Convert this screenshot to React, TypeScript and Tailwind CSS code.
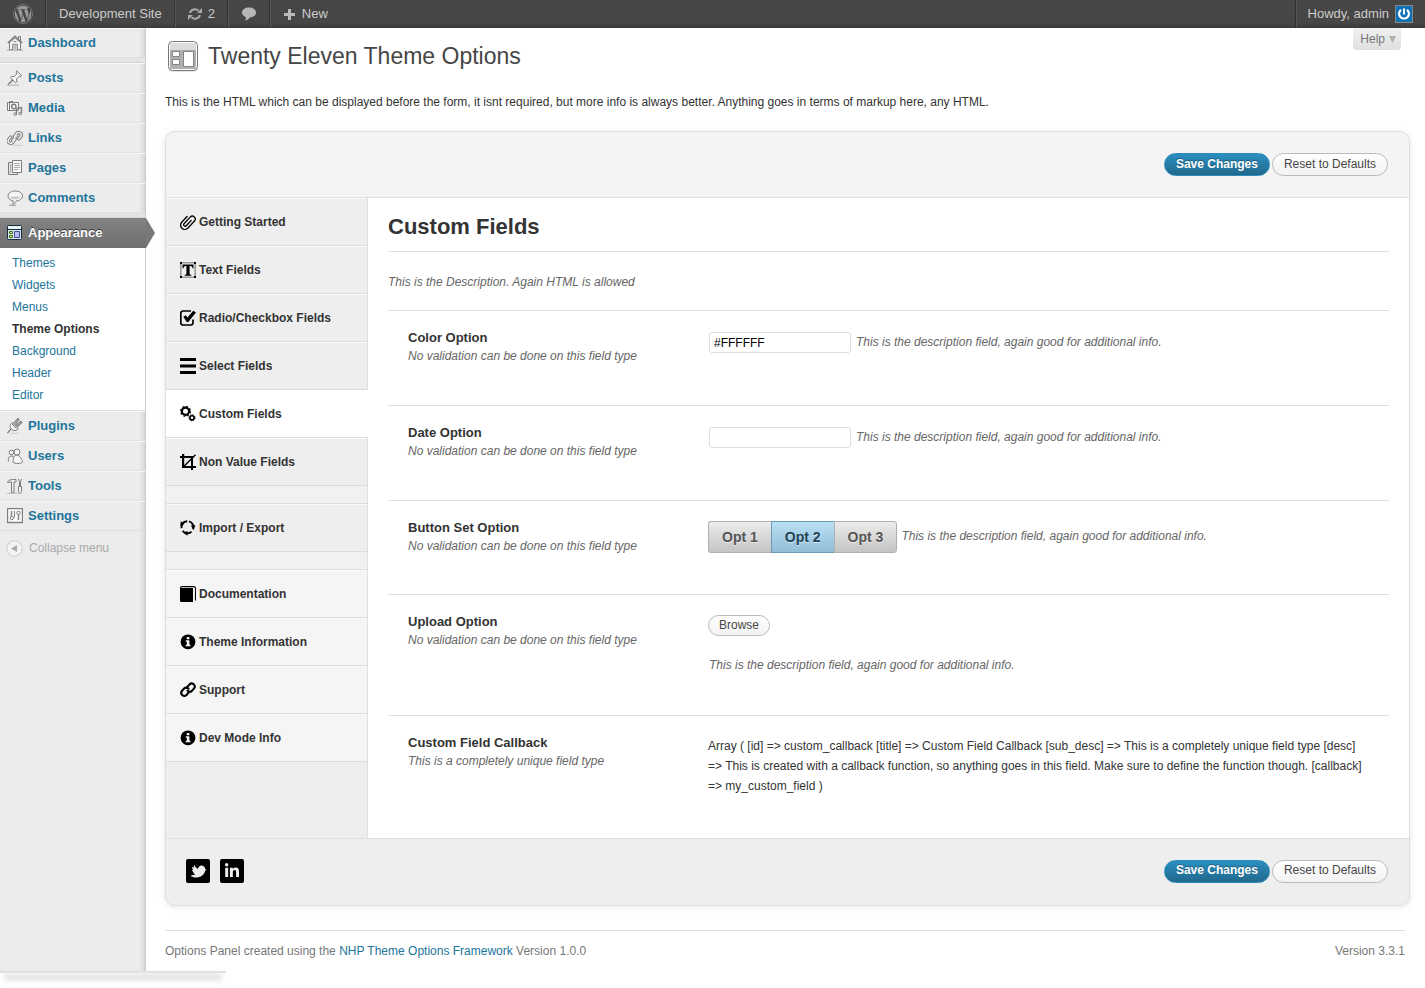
import type { ReactNode } from "react";
import { FaWordpress, FaLinkedinIn } from "react-icons/fa";

const glyph = "h-4 w-4 shrink-0";

function MenuIcon({ children }: { children: ReactNode }) {
  return (
    <svg viewBox="0 0 16 16" className={glyph} fill="none" stroke="#7d7d7d" strokeWidth="1" aria-hidden="true">
      {children}
    </svg>
  );
}

const menuIcons: Record<string, ReactNode> = {
  Dashboard: (
    <MenuIcon>
      <path d="M.8 8 8 1.2 15.2 8" strokeWidth="1.4" />
      <path d="M11.5 4V1.5h2V6" />
      <path d="M2.5 7.5v7h3.200V9.200h4.600v5.300h3.200v-7L8 3z" fill="#f8f8f8" />
      <path d="M7.200 9.500v5M8.800 9.500v5M0 15.200h16" stroke="#aaa" />
      <path d="M6.500 6.500h3" />
    </MenuIcon>
  ),
  Posts: (
    <MenuIcon>
      <path d="m9.500.800 5.300 5-1.800.6-.8-.2-2.600 2.600.3 2.800-1.300 1.200-5.200-5 1.200-1.400 2.600.2 2.500-2.600-.4-1.200z" fill="#f6f6f6" />
      <path d="m6 9.800-4.800 4.700" strokeWidth="1.500" />
      <path d="M0 15.200h12" stroke="#aaa" />
    </MenuIcon>
  ),
  Media: (
    <MenuIcon>
      <path d="M2.500 1.500h3.500M.500 2.500h11v8H.500z" fill="#f8f8f8" />
      <circle cx="6.800" cy="6.500" r="2.200" strokeWidth="1.400" />
      <path d="M2.500 3v7" />
      <path d="M9.500 14V8.500l5-1v6" strokeWidth="1.300" />
      <circle cx="8.300" cy="14" r="1.300" fill="#ddd" />
      <circle cx="13.200" cy="13.500" r="1.300" fill="#ddd" />
    </MenuIcon>
  ),
  Links: (
    <MenuIcon>
      <g strokeLinecap="round">
        <g strokeWidth="3.400">
          <path d="m7.500 6.300 2.300-3c2.300-2.200 5.800.4 4 3.200l-2 2.300" />
          <path d="m8 9.500-2.300 3c-2.300 2.200-5.800-.4-4-3.200l2-2.300" />
          <path d="m5.800 10.200 4-4.600" />
        </g>
        <g stroke="#f2f2f2" strokeWidth="1.400">
          <path d="m7.500 6.300 2.300-3c2.300-2.200 5.800.4 4 3.200l-2 2.300" />
          <path d="m8 9.500-2.300 3c-2.300 2.200-5.800-.4-4-3.200l2-2.300" />
          <path d="m5.800 10.200 4-4.600" />
        </g>
      </g>
      <path d="M6 15.300h10" stroke="#ccc" />
    </MenuIcon>
  ),
  Pages: (
    <MenuIcon>
      <path d="M5.500 2.500h-4v12h9v-2" fill="#e4e4e4" />
      <path d="M5.500.500h9v12h-9z" fill="#fafafa" />
      <path d="M7 3.500h6M7 5.500h6M7 7.500h6M7 9.500h4" stroke="#aaa" />
      <path d="M3.500 4v9" stroke="#aaa" />
    </MenuIcon>
  ),
  Comments: (
    <MenuIcon>
      <path d="M8.300 1c4 0 7.200 2 7.200 4.900s-2.900 4.900-6.200 5c-.8 1.600-2 3-3.600 3.500.6-1 .8-2.300.5-3.600C3 10.300 1 8.500 1 6c0-2.900 3.200-5 7.300-5Z" fill="#f6f6f6" />
      <path d="M3 6.500c1 3.800 9.500 3.800 10.500 0z" fill="#ccc" stroke="none" />
      <path d="M2 15.300h7" stroke="#999" />
    </MenuIcon>
  ),
  Appearance: (
    <svg viewBox="0 0 16 16" className={glyph} aria-hidden="true">
      <rect x=".5" y=".5" width="14" height="14" rx="1" fill="#cdeaf2" stroke="#1d2c3c" />
      <path d="M1 1.500h13v2H1z" fill="#f2f6fa" />
      <path d="M1 4.500h13" stroke="#1d2c3c" />
      <path d="M2.500 6.500h3v2h-3zM2.500 10.500h3v2h-3z" fill="#c7e68d" stroke="#4b6e1c" />
      <path d="M7.500 6.500h5v6h-5z" fill="#b9bbf2" stroke="#4c4f9c" />
    </svg>
  ),
  Plugins: (
    <MenuIcon>
      <path d="m5 4.500 6.500 6.300c-2 2-5 2.400-7.200.2S3 6.500 5 4.500Z" fill="#f4f4f4" />
      <path d="m6.500 5.500 4.500-5 1 1-4 5.200M10 9l4.800-4.500-1-1.200-5 4.500M4 11l-3.500 4" strokeWidth="1.200" />
      <path d="m5 6 4.500 4.500" />
      <path d="M3 15.300h9" stroke="#ccc" />
    </MenuIcon>
  ),
  Users: (
    <MenuIcon>
      <circle cx="4.500" cy="4.500" r="2.300" fill="#eee" />
      <path d="M1.500 13.500c-.7-3 .3-5.500 3-5.500s3 2 3 5.500" fill="#eee" />
      <circle cx="10" cy="4" r="3" fill="#f6f6f6" />
      <path d="M6.500 9c2-2.500 6-2 7 .5.500 2 2.500 2.500 2 4.500-1 2-8 2-9.500 0C5.500 12 7.500 11 6.500 9Z" fill="#f6f6f6" />
    </MenuIcon>
  ),
  Tools: (
    <MenuIcon>
      <path d="M.5 4.500C1.500 1.500 3.500 1.500 9 1.500V4H7v10.500H4.500V4L.5 4.500Z" fill="#eee" />
      <path d="M12.500 8V3.500l-1-2.500M13.500 8V3.500l1-2.500" />
      <path d="M11.500 8.500h3V13c0 2-3 2-3 0z" fill="#f4f4f4" />
      <path d="M0 15.300h15" stroke="#bbb" />
    </MenuIcon>
  ),
  Settings: (
    <MenuIcon>
      <rect x=".5" y=".5" width="15" height="14" fill="#fafafa" strokeWidth="1.400" />
      <path d="M4.500 3v5M11.500 6.500V12" strokeWidth="1.400" />
      <path d="M7.500 3v6.500" />
      <circle cx="4.800" cy="10" r="1.700" />
      <circle cx="11.500" cy="4.800" r="1.700" />
    </MenuIcon>
  ),
};

function NavIcon({ children }: { children: ReactNode }) {
  return (
    <svg viewBox="0 0 16 16" className={glyph} fill="#000" aria-hidden="true">
      {children}
    </svg>
  );
}

const navIcons: Record<string, ReactNode> = {
  clip: (
    <NavIcon>
      <path
        d="M9.600 4.500v7.300a1.500 1.500 0 0 1-3 0V2.800a2.900 2.900 0 0 1 5.800 0v9.500a4.200 4.200 0 0 1-8.500 0V4.500"
        transform="rotate(43 8 7.500)"
        fill="none"
        stroke="#000"
        strokeWidth="1.300"
        strokeLinecap="round"
      />
    </NavIcon>
  ),
  text: (
    <NavIcon>
      <path d="M.8.800h14.400v14.400H.8z" fill="none" stroke="#999" strokeWidth="1.600" />
      <path d="M0 0h2v2H0zM14 0h2v2h-2zM0 14h2v2H0zM14 14h2v2h-2z" />
      <path d="M2.500 2.500h11v3.700h-1c-.3-1.700-1-2.200-2.900-2.200v7.700c0 .8.600 1 1.700 1.100v.9H4.700v-.9c1.100-.1 1.700-.3 1.700-1.100V4C4.500 4 3.800 4.500 3.500 6.200h-1z" />
    </NavIcon>
  ),
  check: (
    <NavIcon>
      <path d="M11 1H3a2.200 2.200 0 0 0-2.200 2.200v9.600A2.200 2.200 0 0 0 3 15h7.800a2.200 2.200 0 0 0 2.200-2.200V9.500" fill="none" stroke="#000" strokeWidth="1.700" />
      <path d="m3.300 6.800 2.500-1.500 1.700 2.200L13.200.800 16 2.500 8.300 12H6.700z" />
    </NavIcon>
  ),
  bars: (
    <NavIcon>
      <path d="M0 0h16v3H0zM0 6.500h16v3H0zM0 13h16v3H0z" />
    </NavIcon>
  ),
  gears: (
    <NavIcon>
      <circle cx="5.500" cy="5.300" r="3.600" fill="none" stroke="#000" strokeWidth="2.200" />
      <circle cx="5.500" cy="5.300" r="4.900" fill="none" stroke="#000" strokeWidth="1.200" strokeDasharray="2 1.850" />
      <circle cx="12" cy="11.800" r="2.100" fill="none" stroke="#000" strokeWidth="1.600" />
      <circle cx="12" cy="11.800" r="3.100" fill="none" stroke="#000" strokeWidth="1" strokeDasharray="1.300 1.130" />
    </NavIcon>
  ),
  crop: (
    <NavIcon>
      <path d="M0 2h2V0h2.200v2H13v10h3v2h-3v2h-2v-2H2V4H0zm4.200 2v8H11V4z" fillRule="evenodd" />
      <path d="M4 12.300 15.500.800" stroke="#000" strokeWidth="1.400" />
    </NavIcon>
  ),
  cycle: (
    <NavIcon>
      <circle cx="7.500" cy="7.200" r="6" fill="none" stroke="#000" strokeWidth="1.900" strokeDasharray="9.800 2.760" transform="rotate(-75 7.500 7.200)" />
      <path d="m10.800 5.500 4.700-.300-2 4.300zM7.500 15.800 3.500 13l4-2zM.200 6 .800 1.200l3.700 2.800z" />
    </NavIcon>
  ),
  book: (
    <NavIcon>
      <path d="M0 2h13v14H1.500A1.500 1.500 0 0 1 0 14.500z" />
      <path d="M.6 3V2A1.400 1.400 0 0 1 2 .600h11.800a1.700 1.700 0 0 1 1.700 1.700V14.500" fill="none" stroke="#000" strokeWidth="1.100" />
    </NavIcon>
  ),
  chain: (
    <NavIcon>
      <g fill="none" stroke="#000" strokeWidth="2.100" strokeLinecap="round">
        <path d="m6.700 5.600 2.800-3.200c2.600-2.500 6.900.9 4.600 4l-2.400 2.700c-1.300 1.100-3.200.9-4.200-.4" />
        <path d="m9.300 9.800-2.800 3.200c-2.600 2.500-6.900-.9-4.600-4l2.400-2.700c1.300-1.100 3.200-.9 4.200.4" />
      </g>
    </NavIcon>
  ),
  info: (
    <NavIcon>
      <circle cx="8" cy="7.800" r="7.400" />
      <path d="M6.800 3h2.600v2.200H6.800zM5.800 6.200h3.600v4.600h1.100v1.500H5.700v-1.500h1.100V7.700h-1z" fill="#f5f5f5" />
    </NavIcon>
  ),
};

type NavItem = { icon: string; label: string; active?: boolean };

const primaryNav: NavItem[] = [
  { icon: "clip", label: "Getting Started" },
  { icon: "text", label: "Text Fields" },
  { icon: "check", label: "Radio/Checkbox Fields" },
  { icon: "bars", label: "Select Fields" },
  { icon: "gears", label: "Custom Fields", active: true },
  { icon: "crop", label: "Non Value Fields" },
];

const infoNav: NavItem[] = [
  { icon: "book", label: "Documentation" },
  { icon: "info", label: "Theme Information" },
  { icon: "chain", label: "Support" },
  { icon: "info", label: "Dev Mode Info" },
];

function NavLink({ item, tone }: { item: NavItem; tone: string }) {
  return (
    <li className={item.active ? "-mr-px bg-white" : tone}>
      <a
        href="#"
        aria-current={item.active ? "page" : undefined}
        className="flex h-12 items-center gap-[3px] border-t border-b border-t-white/70 border-b-[#dcdcdc] pb-px pl-[14px] text-[12px] font-bold text-[#333]"
      >
        {navIcons[item.icon]}
        {item.label}
      </a>
    </li>
  );
}

function MenuLink({ label }: { label: string }) {
  return (
    <li>
      <a
        href="#"
        className="flex h-[30px] items-center gap-[5px] border-t border-b border-t-[#f9f9f9] border-b-[#dfdfdf] pl-[7px] text-[13px] font-bold text-[#21759b]"
      >
        {menuIcons[label]}
        {label}
      </a>
    </li>
  );
}

function MenuGap() {
  return <li aria-hidden="true" className="h-[5px] border-b border-[#d4d4d4] bg-[#e4e4e4]" />;
}

const pillButton =
  "rounded-full border border-[#bbb] bg-linear-to-b from-white to-[#f2f2f2] pb-0.5 text-[12px] leading-none text-[#464646]";

function FormActions() {
  return (
    <div className="flex gap-0.5">
      <button
        type="submit"
        className="h-[23px] rounded-full border border-[#298cba] bg-linear-to-b from-[#2a8fc0] to-[#21688c] px-[11px] pb-0.5 text-[12px] leading-none font-bold text-white [text-shadow:0_-1px_0_rgba(0,0,0,0.3)]"
      >
        Save Changes
      </button>
      <button type="button" className={`${pillButton} h-[23px] px-[11px]`}>
        Reset to Defaults
      </button>
    </div>
  );
}

function FieldRow({
  id,
  title,
  note = "No validation can be done on this field type",
  height,
  children,
}: {
  id?: string;
  title: string;
  note?: string;
  height: string;
  children: ReactNode;
}) {
  return (
    <div className={`flex border-t border-[#dfdfdf] pl-5 ${height}`}>
      <div className="w-[300px] shrink-0 pt-[18px]">
        <label htmlFor={id} className="block text-[13px] leading-[18px] font-bold text-[#333]">
          {title}
        </label>
        <p className="text-[12px] leading-[18px] text-[#666] italic">{note}</p>
      </div>
      <div className="min-w-0 flex-1 pt-5 text-[12px]">{children}</div>
    </div>
  );
}

function Hint() {
  return (
    <span className="pb-0.5 text-[#666] italic">This is the description field, again good for additional info.</span>
  );
}

const textBox =
  "h-[21px] w-[142px] rounded-[3px] border border-[#dfdfdf] bg-white px-1 text-[12px] text-[#000]";

const subMenu = ["Themes", "Widgets", "Menus", "Theme Options", "Background", "Header", "Editor"];

export default function App() {
  return (
    <div className="bg-white pb-4 font-['Liberation_Sans',Arial,sans-serif] text-[12px] text-[#333]">
      <header className="flex h-7 items-stretch justify-between bg-linear-to-b from-[#464646] from-80% to-[#3a3a3a] text-[13px] text-[#ccc]">
        <nav className="flex items-stretch" aria-label="Toolbar">
          <a href="#" aria-label="WordPress" className="flex w-[46px] items-center justify-center border-r border-[#333] text-[#999]">
            <FaWordpress className="h-5 w-5" />
          </a>
          <a href="#" className="flex items-center border-r border-l border-r-[#333] border-l-[#555] px-3">
            Development Site
          </a>
          <a href="#" className="flex items-center gap-1.5 border-r border-l border-r-[#333] border-l-[#555] px-3">
            <svg viewBox="0 0 14 12" className="h-3 w-3.5" fill="none" stroke="#aaa" strokeWidth="2" aria-hidden="true">
              <path d="M2 5a5 4.600 0 0 1 8.500-2.200M12 7a5 4.600 0 0 1-8.500 2.200" />
              <path d="M9 5h5V0zM5 7H0v5z" fill="#aaa" stroke="none" />
            </svg>
            2
          </a>
          <a href="#" aria-label="Comments" className="flex items-center border-r border-l border-r-[#333] border-l-[#555] px-[13px]">
            <svg viewBox="0 0 14 14" className="h-3.5 w-3.5" fill="#b5b5b5" aria-hidden="true">
              <path d="M7 .5c3.800 0 7 2 7 5s-2.600 4.800-6 5c-1.200 1.500-3 3-4.800 3.300C4 12.500 4 11 3.700 10 1.500 9.200 0 7.500 0 5.500c0-3 3.200-5 7-5Z" />
            </svg>
          </a>
          <a href="#" className="flex items-center gap-[7px] border-l border-[#555] pl-[13px]">
            <svg viewBox="0 0 11 11" className="h-[11px] w-[11px]" fill="#bbb" aria-hidden="true">
              <path d="M4 0h3v4h4v3H7v4H4V7H0V4h4z" />
            </svg>
            New
          </a>
        </nav>
        <a href="#" className="flex items-center gap-1.5 border-l border-[#2f2f2f] pr-3">
          <span className="flex h-full items-center border-l border-[#555] pl-[11px]">Howdy, admin</span>
          <svg viewBox="0 0 18 18" className="h-[18px] w-[18px]" aria-hidden="true">
            <rect x=".5" y=".5" width="17" height="17" fill="#0d72b5" stroke="#888" />
            <path d="M6 4.800a4.900 4.900 0 1 0 6 0M9 3.500v6" fill="none" stroke="#fff" strokeWidth="2.100" />
          </svg>
        </a>
      </header>

      <div className="flex items-stretch">
        <aside className="w-[146px] shrink-0 border-r border-[#ccc] bg-[#ececec] shadow-[inset_-6px_0_6px_-6px_rgba(0,0,0,0.2)]">
          <ul>
            <MenuLink label="Dashboard" />
            <MenuGap />
            {["Posts", "Media", "Links", "Pages", "Comments"].map((label) => (
              <MenuLink key={label} label={label} />
            ))}
            <MenuGap />
            <li className="relative">
              <a
                href="#"
                className="-mr-px flex h-[30px] items-center gap-[5px] bg-linear-to-b from-[#828282] to-[#6f6f6f] pl-[7px] text-[13px] font-bold text-white [text-shadow:0_-1px_0_#333]"
              >
                {menuIcons.Appearance}
                Appearance
              </a>
              <svg viewBox="0 0 9 30" className="absolute top-0 left-[146px] h-[30px] w-[9px]" aria-hidden="true">
                <path d="M0 0 9 15 0 30z" fill="#787878" />
              </svg>
              <ul className="border-b border-[#dfdfdf] bg-white py-1">
                {subMenu.map((label) => (
                  <li key={label}>
                    <a
                      href="#"
                      className={
                        label === "Theme Options"
                          ? "block pl-3 leading-[22px] font-bold text-[#333]"
                          : "block pl-3 leading-[22px] text-[#21759b]"
                      }
                    >
                      {label}
                    </a>
                  </li>
                ))}
              </ul>
            </li>
            {["Plugins", "Users", "Tools", "Settings"].map((label) => (
              <MenuLink key={label} label={label} />
            ))}
          </ul>
          <button type="button" className="flex h-[34px] items-center gap-1.5 pl-1.5 text-[12px] text-[#aaa]">
            <svg viewBox="0 0 17 17" className="h-[17px] w-[17px]" aria-hidden="true">
              <circle cx="8.500" cy="8.500" r="7.800" fill="#f3f3f3" stroke="#c8c8c8" />
              <path d="M11 5v7L5 8.500z" fill="#aaa" />
            </svg>
            Collapse menu
          </button>
        </aside>

        <div className="min-w-0 flex-1 pl-[19px]">
          <div className="flex items-start justify-between pr-6">
            <h1 className="flex h-14 items-center gap-2.5 pl-[3px] text-[23px] text-[#464646]">
              <svg viewBox="0 0 30 31" className="h-[31px] w-[30px]" aria-hidden="true">
                <rect x=".5" y="1" width="29" height="29.500" rx="4" fill="#ccc" />
                <rect x=".5" y=".5" width="29" height="29" rx="4" fill="#fdfdfd" stroke="#777" />
                <path d="M2 3.500A1.500 1.500 0 0 1 3.500 2h23A1.500 1.500 0 0 1 28 3.500V8H2z" fill="#dcdcdc" />
                <path d="M2 8.500h26v18a1.500 1.500 0 0 1-1.500 1.500h-23A1.500 1.500 0 0 1 2 26.500z" fill="#b0b0b0" />
                <path d="M4.500 10.500h7v5h-7zM4.500 18.500h7v5h-7zM15.500 10.500h10v15h-10z" fill="#fff" stroke="#858585" />
              </svg>
              Twenty Eleven Theme Options
            </h1>
            <button
              type="button"
              className="flex h-[22px] items-center gap-1 rounded-b-[3px] bg-linear-to-b from-[#f1f1f1] to-[#dfdfdf] pr-[5px] pl-[7px] text-[12px] text-[#777]"
            >
              Help
              <svg viewBox="0 0 7 7" className="h-[7px] w-[7px]" aria-hidden="true">
                <path d="M0 0h7L3.500 7z" fill="#b0b0b0" />
              </svg>
            </button>
          </div>

          <p className="mt-2 leading-5">
            This is the HTML which can be displayed before the form, it isnt required, but more info is always better.
            Anything goes in terms of markup here, any HTML.
          </p>

          <form className="mt-[19px] mr-[15px] overflow-hidden rounded-[10px] border border-[#dfdfdf] bg-[#eee] shadow-[0_1px_6px_rgba(0,0,0,0.1)]">
            <div className="flex h-[66px] items-center justify-end border-b border-[#dfdfdf] bg-[#f4f4f4] pr-[21px]">
              <FormActions />
            </div>

            <div className="flex border-b border-[#dfdfdf]">
              <nav className="w-[202px] shrink-0 border-r border-[#dfdfdf]" aria-label="Sections">
                <ul>
                  {primaryNav.map((item) => (
                    <NavLink key={item.label} item={item} tone="bg-[#eee]" />
                  ))}
                  <li aria-hidden="true" className="h-[18px] border-b border-[#dcdcdc] bg-[#f1f1f1]" />
                  <NavLink item={{ icon: "cycle", label: "Import / Export" }} tone="bg-[#eee]" />
                  <li aria-hidden="true" className="h-[18px] border-b border-[#dcdcdc] bg-[#f1f1f1]" />
                  {infoNav.map((item) => (
                    <NavLink key={item.label} item={item} tone="bg-[#f5f5f5]" />
                  ))}
                </ul>
              </nav>

              <div className="min-w-0 flex-1 bg-white px-5">
                <h2 className="flex h-[54px] items-center border-b border-[#dfdfdf] pt-1 text-[22px] font-bold text-[#333]">
                  Custom Fields
                </h2>
                <p className="flex h-[58px] items-center pt-0.5 text-[#666] italic">
                  This is the Description. Again HTML is allowed
                </p>

                <FieldRow id="color" title="Color Option" height="h-[95px]">
                  <div className="flex items-center gap-[5px] pt-px pl-px">
                    <input id="color" type="text" defaultValue="#FFFFFF" className={textBox} />
                    <Hint />
                  </div>
                </FieldRow>

                <FieldRow id="date" title="Date Option" height="h-[95px]">
                  <div className="flex items-center gap-[5px] pt-px pl-px">
                    <input id="date" type="text" className={textBox} />
                    <Hint />
                  </div>
                </FieldRow>

                <FieldRow title="Button Set Option" height="h-[94px]">
                  <div className="flex items-center gap-1">
                    <fieldset className="flex" aria-label="Button Set Option">
                      {["1", "2", "3"].map((n) => (
                        <label
                          key={n}
                          className="relative flex h-8 cursor-pointer items-center border border-r-0 border-[#b0b0b0] bg-linear-to-b from-[#ececec] to-[#c4c4c4] px-[13px] text-[14px] font-bold text-[#555] [text-shadow:0_1px_0_rgba(255,255,255,0.6)] first:rounded-l-[3px] last:rounded-r-[3px] last:border-r has-checked:border-[#6b9ab5] has-checked:from-[#b9e0f5] has-checked:to-[#92bdd6] has-checked:text-[#1c4257]"
                        >
                          <input type="radio" name="button-set" value={n} defaultChecked={n === "2"} className="sr-only" />
                          Opt {n}
                        </label>
                      ))}
                    </fieldset>
                    <Hint />
                  </div>
                </FieldRow>

                <FieldRow id="upload" title="Upload Option" height="h-[121px]">
                  <button id="upload" type="button" className={`${pillButton} block h-[21px] px-2.5`}>
                    Browse
                  </button>
                  <p className="mt-[19px] pl-px leading-5">
                    <Hint />
                  </p>
                </FieldRow>

                <FieldRow title="Custom Field Callback" note="This is a completely unique field type" height="h-[123px]">
                  <p className="max-w-[664px] leading-5">
                    Array ( [id] =&gt; custom_callback [title] =&gt; Custom Field Callback [sub_desc] =&gt; This is a
                    completely unique field type [desc] =&gt; This is created with a callback function, so anything goes
                    in this field. Make sure to define the function though. [callback] =&gt; my_custom_field )
                  </p>
                </FieldRow>
              </div>
            </div>

            <div className="flex h-[66px] items-center justify-between pr-[21px] pb-0.5 pl-5">
              <div className="flex gap-2.5">
                <a href="#" aria-label="Twitter" className="rounded-[2px] bg-black">
                  <svg viewBox="0 0 24 24" className="h-6 w-6" fill="#eee" aria-hidden="true">
                    <path d="m20.700 11-1.500-.9c-.3-2.200-1.800-3.600-3.600-3.600-2 0-3.200 1.300-3.600 3.200-1.500-.4-2.900-1.700-3.600-3.700-.8.800-.8 1.800-.4 2.700L6 8c0 1.300.5 2.200 1.300 2.800l-1.300.1c.3 1.200 1 1.900 2 2.300l-.9.5c.6.9 1.300 1.200 2.300 1.300-1.200 1.200-3 1.600-5 1.400 2.300 2.200 6.500 2.600 9.800 1.300 3-1.200 4.700-3.700 5-6.100z" />
                  </svg>
                </a>
                <a href="#" aria-label="LinkedIn" className="flex h-6 w-6 items-center justify-center rounded-[2px] bg-black text-[#eee]">
                  <FaLinkedinIn className="h-4 w-4" />
                </a>
              </div>
              <FormActions />
            </div>
          </form>

          <footer className="mt-6 mr-5 flex h-[41px] items-center justify-between border-t border-[#dfdfdf] text-[#777]">
            <p>
              Options Panel created using the{" "}
              <a href="#" className="text-[#21759b]">
                NHP Theme Options Framework
              </a>{" "}
              Version 1.0.0
            </p>
            <p>Version 3.3.1</p>
          </footer>
        </div>
      </div>
      <div aria-hidden="true" className="w-[226px]">
        <div className="h-0.5 bg-[#dfdfdf]" />
        <div className="mx-1 h-2 bg-[#e8e8e8] blur-[2px]" />
      </div>
    </div>
  );
}
